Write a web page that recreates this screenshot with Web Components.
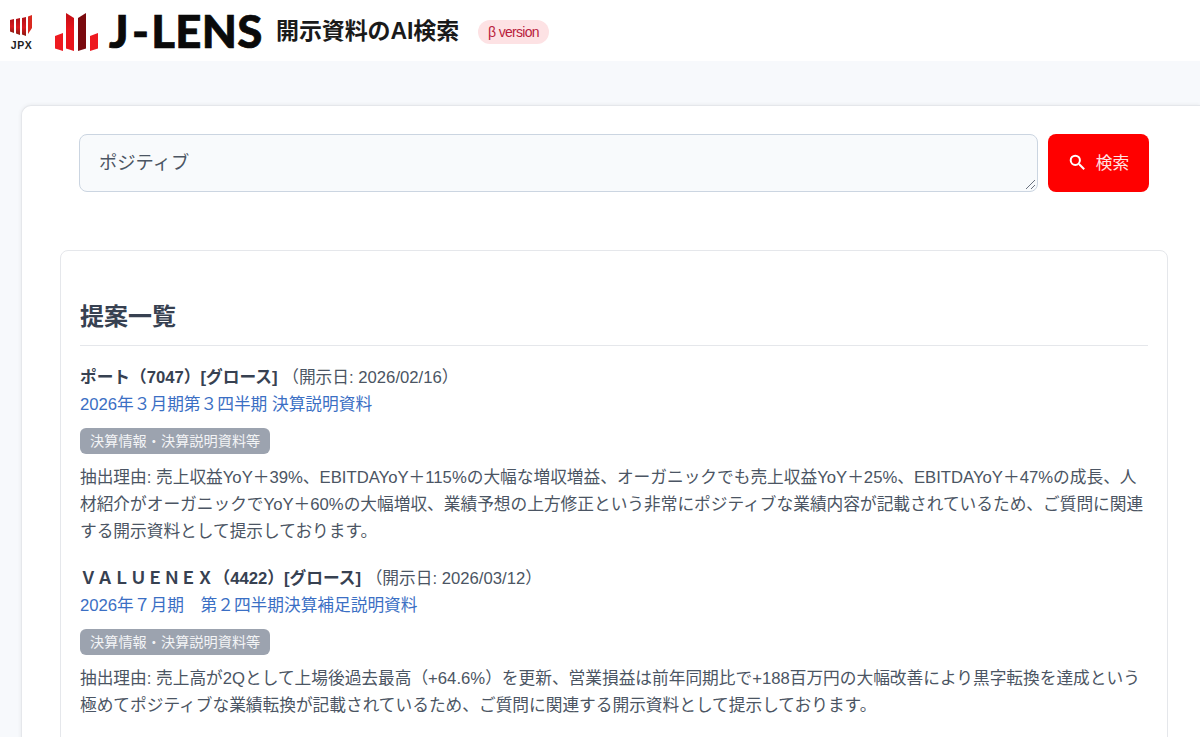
<!DOCTYPE html>
<html lang="ja"><head><meta charset="utf-8"><title>J-LENS</title>
<style>
html,body{margin:0;height:737px;overflow:hidden;background:#f7f9fc}
body{font-family:"Liberation Sans","Noto Sans CJK JP",sans-serif;color:#4b5563}
</style></head><body>
<jl-header></jl-header>
<jl-main>
  <jl-search value="ポジティブ"></jl-search>
  <jl-results heading="提案一覧">
    <jl-item name="ポート（7047）[グロース]" date="（開示日: 2026/02/16）" link="2026年３月期第３四半期 決算説明資料" tag="決算情報・決算説明資料等">抽出理由: 売上収益YoY＋39%、EBITDAYoY＋115%の大幅な増収増益、オーガニックでも売上収益YoY＋25%、EBITDAYoY＋47%の成長、人材紹介がオーガニックでYoY＋60%の大幅増収、業績予想の上方修正という非常にポジティブな業績内容が記載されているため、ご質問に関連する開示資料として提示しております。</jl-item>
    <jl-item name="ＶＡＬＵＥＮＥＸ（4422）[グロース]" date="（開示日: 2026/03/12）" link="2026年７月期　第２四半期決算補足説明資料" tag="決算情報・決算説明資料等">抽出理由: 売上高が2Qとして上場後過去最高（+64.6%）を更新、営業損益は前年同期比で+188百万円の大幅改善により黒字転換を達成という極めてポジティブな業績転換が記載されているため、ご質問に関連する開示資料として提示しております。</jl-item>
  </jl-results>
</jl-main>
<script>
function def(name,html,attrs){
  customElements.define(name,class extends HTMLElement{
    constructor(){super();this.attachShadow({mode:'open'})}
    connectedCallback(){
      let h=html;
      for(const a of (attrs||[])) h=h.split('{{'+a+'}}').join(this.getAttribute(a)||'');
      this.shadowRoot.innerHTML=h;
    }
  });
}
def('jl-header',`<style>
:host{display:flex;align-items:center;height:61px;background:#fff;box-sizing:border-box;padding-left:10px}
svg{display:block}
.jpx{display:flex;flex-direction:column;align-items:center;width:23px;margin-right:22px;margin-top:5px}
.jpx span{font:700 10.5px/11px "Liberation Sans",sans-serif;color:#222;letter-spacing:.5px;margin-top:2px;white-space:nowrap}
.mark{margin-right:10px;margin-top:3px}
.brand{font:900 45.5px/1 Lato,sans-serif;color:#0a0a0a;width:153px;margin-right:14px;white-space:pre;-webkit-text-stroke:.7px #0a0a0a;letter-spacing:.3px}
.brand i{font-style:normal;margin:0 2px 0 3px}
.title{font:700 23px/1 "Liberation Sans","Noto Sans CJK JP",sans-serif;color:#1a1a1a;letter-spacing:-.1px;margin-right:19px;margin-top:1px}
.beta{font:400 14px/24px "Liberation Sans",sans-serif;background:#fde2e4;color:#b91c3c;border-radius:12px;padding:0 10px;letter-spacing:-.7px;margin-top:2px}
</style>
<div class="jpx"><svg width="23" height="23" viewBox="0 0 23 23"><defs><linearGradient id="g" x1="0" y1="0" x2="0" y2="1"><stop offset="0" stop-color="#b01218"/><stop offset=".55" stop-color="#d81a20"/><stop offset="1" stop-color="#8a1a10"/></linearGradient></defs>
<path d="M0 5l4-1v14l-4-1.5z" fill="url(#g)"/><path d="M6 4l4-1v17l-4-1.5z" fill="url(#g)"/><path d="M12 3l4-1v19l-4-1.5z" fill="url(#g)"/><path d="M18 1.5l4-1.5v13l-4 6z" fill="#d92a20"/></svg><span>JPX</span></div>
<svg class="mark" width="44" height="40" viewBox="0 0 44 40"><defs><linearGradient id="r" x1="0" y1="0" x2="0" y2="1"><stop offset="0" stop-color="#c20f15"/><stop offset=".45" stop-color="#ea141b"/></linearGradient></defs><path d="M0 24l8-3v18l-8-2.500z" fill="#ee1a20"/><path d="M11 1l8 5v33l-8-2.500z" fill="url(#r)"/><path d="M23 6l8-5v35.500l-8 2.500z" fill="#7a0a0e"/><path d="M35 24l8-3v15.500l-8 2.500z" fill="#ee1a20"/></svg>
<span class="brand">J<i>-</i>LENS</span><span class="title">開示資料のAI検索</span><span class="beta">β version</span>`);
def('jl-main',`<style>
:host{display:block;padding:44px 0 0 21px}
.card{background:#fff;border:1px solid #e5e7eb;border-right:0;border-radius:10px 0 0 0;box-shadow:0 0 4px rgba(0,0,0,.07);padding:28px 32px 0 38px;height:700px;box-sizing:border-box}
</style><div class="card"><slot></slot></div>`);
def('jl-search',`<style>
:host{display:flex;gap:10px;height:58px;margin:0 -19px 58px 19px}
.box{flex:none;width:959px;box-sizing:border-box;position:relative;background:#f8fafc;border:1px solid #cbd5e1;border-radius:8px;padding:16px 19px;font-size:18.300px;line-height:24px;color:#4b5563}
.grip{position:absolute;right:1px;bottom:1px}
.btn{flex:none;width:101px;background:#ff0000;border-radius:8px;font-size:16.7px;display:flex;align-items:center;justify-content:center;gap:10px;padding-bottom:2px;box-sizing:border-box}
.btn span{color:#ffe3e3}
</style><div class="box">{{value}}<svg class="grip" width="11" height="11" viewBox="0 0 11 11"><path d="M1 10L10 1M6 10l4-4" stroke="#6b7280" fill="none"/></svg></div>
<div class="btn"><svg width="18" height="18" viewBox="0 0 18 18"><circle cx="7.3" cy="7.3" r="4.6" fill="none" stroke="#fff" stroke-width="2"/><path d="M11 11l5.2 5.2" stroke="#fff" stroke-width="2"/></svg><span>検索</span></div>`,['value']);
def('jl-results',`<style>
:host{display:block;background:#fff;border:1px solid #e5e7eb;border-radius:8px;padding:48px 19px 0 19px;height:600px;box-sizing:border-box}
h2{margin:0 0 18px;font:700 24px/36px "Liberation Sans","Noto Sans CJK JP",sans-serif;color:#374151;padding-bottom:10px;border-bottom:1px solid #e5e7eb}
</style><h2>{{heading}}</h2><slot></slot>`,['heading']);
def('jl-item',`<style>
:host{display:block;margin-bottom:20px;font-size:16.7px;line-height:27px;color:#4b5563}
.head b{color:#374151}
a{display:block;color:#3b6fc4;text-decoration:none}
.tag{display:inline-block;background:#9ca3af;color:#f3f4f6;font-size:14.2px;line-height:26px;border-radius:6px;padding:0 10px;margin:10px 0 10px;vertical-align:top}
p{margin:0}
</style><div class="head"><b>{{name}}</b> {{date}}</div><a>{{link}}</a><div><span class="tag">{{tag}}</span></div><p><slot></slot></p>`,['name','date','link','tag']);
</script>
</body></html>
